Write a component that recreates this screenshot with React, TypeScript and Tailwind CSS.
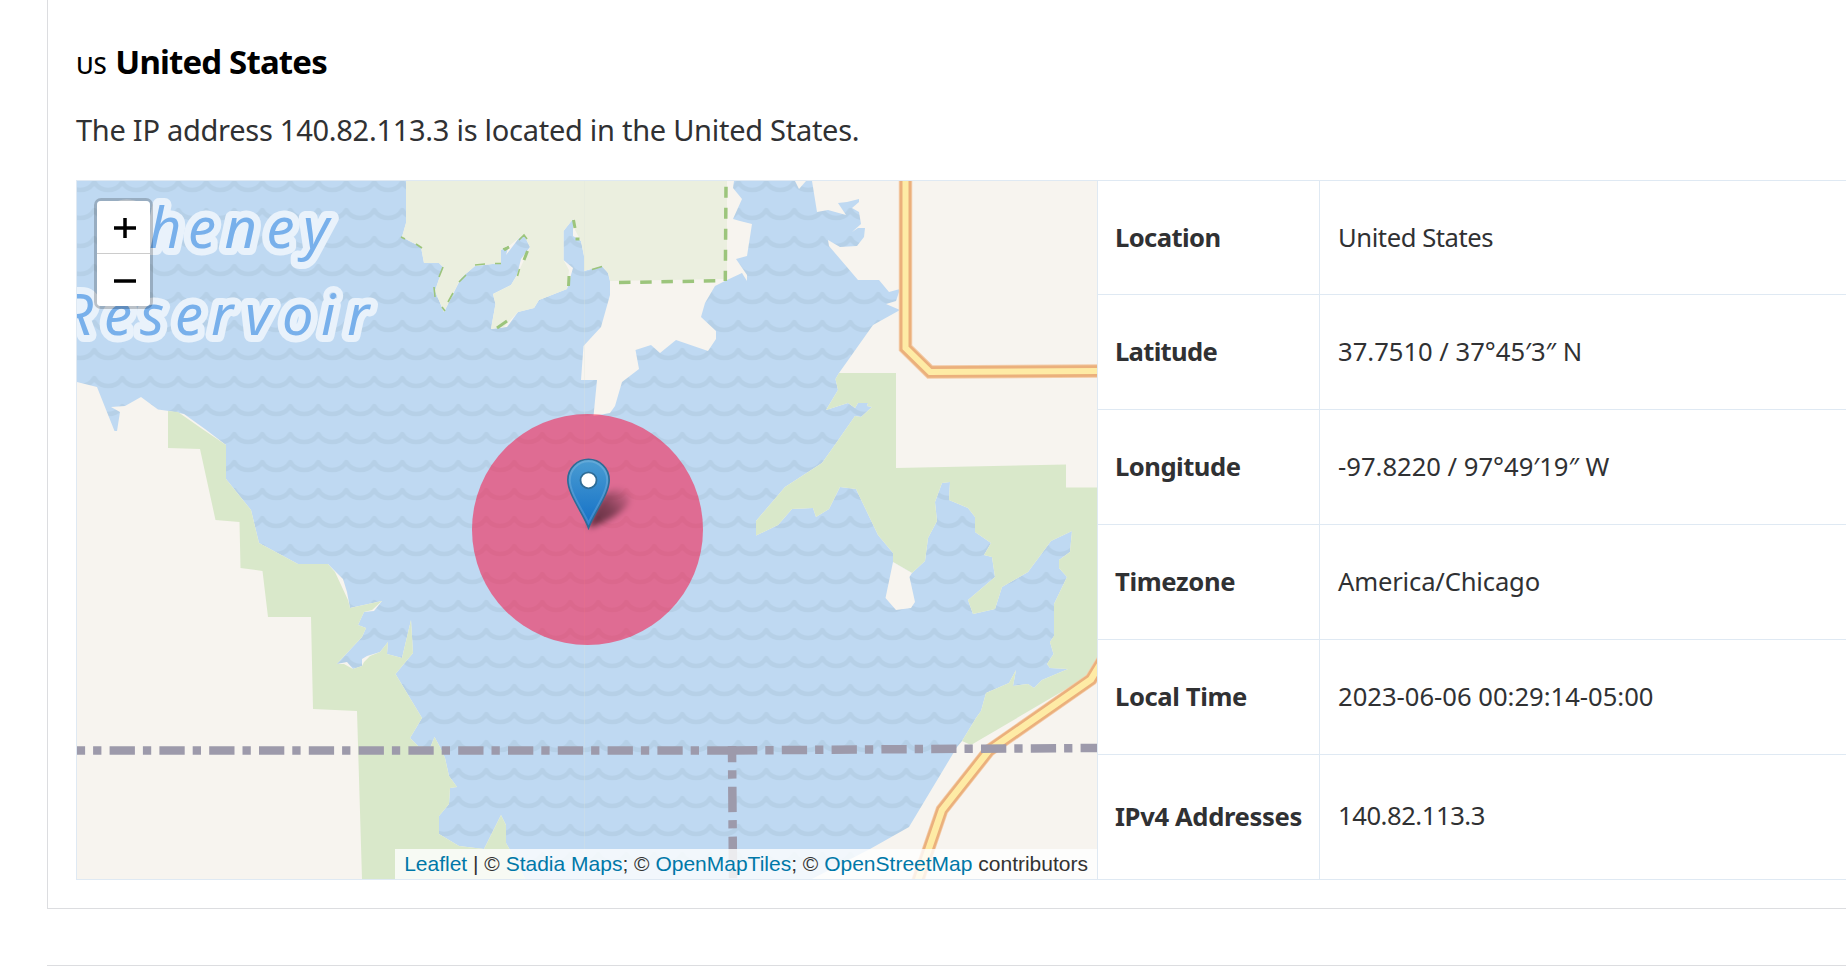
import React from "react";

const mainShore =
  "77,382 97,387 114.5,431 117,431 120,412 111,407 125,406 141,397 158,409.5 169,411 184,414 205,429 226,445 226,479 251,510 259,543 298,564 328,564 343,579 347,592 350,608 382,601 374,611 364,612 358,625 366,628 362,637 336.7,664 347,662 353,669 362,666 362,659 367,656 380,652 388,642 387,654 402,658 411,620 413,653 395.5,674 422,718 410,738 418,746 430,748 434.5,737 440,747 445,758 449,776 457,787 450,788 449,804 439,816 439,834 459,846 484,849 501,815 506,825 506,843 510,850 525,879 77,879";

const westWood =
  "168,411 178,412 203,429.5 226,445 226,479 251,510 259,543 298,564 328,564 335,572 348,600 350,608 382,601 372,610 364,612 358,625 366,628 362,637 336.7,664 344,664 353,669 362,666 364,662 370,656 380,652 388,642 387,654 402,658 411,620 413,653 395.5,674 422,718 410,738 418,746 430,748 434.5,737 440,747 445,758 449,776 457,787 450,788 449,804 439,816 439,834 459,846 484,849 501,815 506,825 506,843 510,850 525,879 362,879 357,711 313,709 311,617 268,617 262.5,571 240.5,568 239.5,522 215.5,520 200,449 168,448";

const park =
  "406,181 406,223 402,237 421,247 424,263 439,263 443,267 435,291 444,312 461,278 475,266 501,263 501,250 509,246 519,238 524,235 530,247 523,262 517,275 511,285 493,294 495.5,304 491,329 504,327 518,312 534,308 539,300 567,289 569,270 563.5,260 563.5,231 573,219 575,230 581,241 584,256 584,271 602,266 608,273 610,281 727,279 727,181";

const northLand =
  "406,181 406,223 402,237 421,247 424,263 439,263 443,267 435,291 444,312 461,278 475,266 501,263 501,250 509,245 506,255 519,238 524,235 530,247 521,259 517,275 511,285 493,294 495.5,304 491,329 507,327 518,312 534,308 539,300 567,289 573,268 563.5,260 563.5,231 573,219 573,236 581,241 584,256 584,271 602,266 608,273 610,281 610,295 601,327 583.5,346 581,380 597,380 593.5,416 610,413 615,406 622,382 639,369 635.5,350 651,345 660,353 676,340 708,351 716,339 716,331 701,317 705,303 715,286 727,280 742,273 747,281 747,275 736,259 747,256 752,224 740,221 733,219 742,199 733,188 734,181";

const eastShoreTop =
  "812,181 817,212 828,210 846,215 838,203 847,202 859,199 859,202 852,208 859,212 861,224 852,232 858,228 865,228 864,237 857,246 840,247 828,240 829,246 858,280 879,280 889,292 900,289 896,301 886,304 900,310 873,325 839,373";

const eastShore =
  "839,373 835.5,379 838,390 826,410 848,403 855,408 858,403 868,403 867,406 872,407 861,417 855,416 832,449 822,463 785,487 756,521 756,535.5 778,525 792,509 813,508 816,517 829,509 840,487 856,489 878,535 893,553 893,562 912,573 925,561 928,538 937,521 935,502 942,483 950,482 949,500 968,508 975,517 975,532 991,543 984,555 992,557 995,577 968,600 973,614 995,609 1002,587 1028,572 1051,541 1072,531 1070,552 1059,560 1059,568 1067,577 1054,604 1054,636 1050,642 1053.5,654 1047,664 1050,668 1068,669 1042,680 1034,688 1028,684 1013,686 1016,670 1009,683 986,693 981,711 976,718 962,741";

const coastTicks =
  "M401 237l4 2M416 244l6 4M443 267l-4 10M434 287l1 10M442 307l3 4M453 293l-5 9M466 275l-7 7M475 265l10-1M495 263.500l6 0M503 249l6-2M519 240l5-5 3 4M519.500 269l-2 7M592 269.500l10-3";

const coastTicksBold = "M504 250l5-3M527.500 251l-3.500 9M573.500 220l1.500 8M575.500 239l4 0M569 276l-.5 10M497 328l10-7";

const Waves = ({ id, opacity }: { id: string; opacity: number }) => (
  <pattern id={id} x="94.300" y="200" width="28" height="28" patternUnits="userSpaceOnUse">
    <path
      d="M-28 10A16.200 16.200 0 0 0 0 10A16.200 16.200 0 0 0 28 10A16.200 16.200 0 0 0 56 10"
      fill="none"
      stroke="#a8c2d8"
      strokeOpacity={opacity}
      strokeWidth="4.500"
      strokeLinejoin="round"
    />
  </pattern>
);

function MapCanvas() {
  return (
    <svg className="block h-[698px] w-[1020px]" viewBox="77 181 1020 698" aria-label="Map">
      <defs>
        <Waves id="waves" opacity={0.4} />
        <linearGradient id="pin" x1="0" y1="0" x2="0" y2="1">
          <stop offset="0" stopColor="#4a9cd2" />
          <stop offset="1" stopColor="#126fc6" />
        </linearGradient>
        <linearGradient id="shade" x1="0" y1="1" x2="1" y2="0">
          <stop offset="0" stopColor="#000" stopOpacity="0.6" />
          <stop offset="0.500" stopColor="#000" stopOpacity="0.42" />
          <stop offset="1" stopColor="#000" stopOpacity="0" />
        </linearGradient>
        <filter id="soft" x="-40%" y="-40%" width="180%" height="180%">
          <feGaussianBlur stdDeviation="3" />
        </filter>
      </defs>
      <rect x="77" y="181" width="1020" height="698" fill="#bfd9f2" />
      <rect x="77" y="181" width="1020" height="698" fill="url(#waves)" />

      <g fill="#f7f4ef">
        <polygon points={mainShore} />
        <polygon points={northLand} />
        <polygon points="795,181 799,189 806,181" />
        <polygon points={`${eastShoreTop} ${eastShore} 957,747 909,827 870,849 812,879 1097,879 1097,181`} />
      </g>
      <polygon points={westWood} fill="#d9e8ca" />
      <polygon points={`${eastShore} 971,745 1097,671 1097,487.5 1066,487.5 1066,464.500 896,468 896,373`} fill="#d9e8ca" />
      <polygon points="893,562 885.5,598 896,610 911,608 915,602 909.5,577 912,573" fill="#f7f4ef" />
      <polygon points={park} fill="#ebefdf" />

      <g fill="none" stroke="#9cc57c">
        <path d="M726 186.700L725.300 281" strokeDasharray="11 10" strokeWidth="3.500" />
        <path d="M619 282.500L716 280.800" strokeDasharray="11.500 9.700" strokeWidth="3.500" />
        <path d={coastTicks} strokeWidth="1.600" />
        <path d={coastTicksBold} strokeWidth="3" />
      </g>
      <path d="M584.500 181V879" stroke="#dfe5dc" strokeOpacity="0.28" />

      <g fill="none" strokeLinejoin="miter">
        <path d="M905.500 175V348L930 372L1100 371" stroke="#f3cba7" strokeWidth="13.500" />
        <path d="M905.500 175V348L930 372L1100 371" stroke="#ebb07c" strokeWidth="11.500" />
        <path d="M905.500 175V348L930 372L1100 371" stroke="#feeba5" strokeWidth="6" />
        <path d="M1104 658L1091 679.500L989 750.500L942 810L916 886" stroke="#f3cba7" strokeWidth="13" />
        <path d="M1104 658L1091 679.500L989 750.500L942 810L916 886" stroke="#ebb07c" strokeWidth="11.500" />
        <path d="M1104 658L1091 679.500L989 750.500L942 810L916 886" stroke="#feeba5" strokeWidth="6.500" />
      </g>

      <g fill="none" stroke="#9d9aab" strokeWidth="8.500" strokeDasharray="25.300 8 8.300 8.200">
        <path d="M59.800 750.500H732" />
        <path d="M732 750.500L925 749L1100 748" />
        <path d="M732 746L733 879" strokeDashoffset="9" />
      </g>

      <g
        fill="#78b0eb"
        stroke="#e9f2fb"
        strokeWidth="14"
        strokeLinejoin="round"
        paintOrder="stroke"
        fontFamily="'Noto Sans', 'Open Sans', sans-serif"
        fontStyle="italic"
        fontSize="56"
      >
        <text x="101 149 188 224.500 266.500 303" y="248">Cheney</text>
        <text x="61 104 140 175 211 245 282 321 347" y="335">Reservoir</text>
      </g>

      <circle cx="587.500" cy="529.500" r="115.500" fill="#ff0033" fillOpacity="0.5" />

      <path d="M589 528C592 512 600 494 612 490C628 486 636 498 624 509C613 519 600 524 589 528Z" fill="url(#shade)" filter="url(#soft)" />
      <path
        d="M588.500 528C583 513 567.800 494 567.800 480A20.700 20.700 0 0 1 609.200 480C609.200 494 594 513 588.500 528Z"
        fill="url(#pin)"
        stroke="#2e6c97"
        strokeWidth="1.600"
      />
      <path
        d="M588.500 523C582 509 569.800 493 569.800 480A18.700 18.700 0 0 1 607.200 480C607.200 493 595 509 588.500 523Z"
        fill="none"
        stroke="#fff"
        strokeOpacity="0.15"
        strokeWidth="2"
      />
      <circle cx="588.500" cy="480.300" r="8" fill="#fff" stroke="#2e6c97" strokeWidth="1.800" />
    </svg>
  );
}

function ZoomControl() {
  return (
    <div className="absolute top-[17px] left-[17px] w-[59px] rounded-[7px] border-[3px] border-black/20 bg-clip-padding">
      <div className="overflow-hidden rounded-[4px] bg-white">
        <button className="flex h-[53px] w-full items-center justify-center border-b border-[#ccc] pt-px pl-0.5" aria-label="Zoom in">
          <svg className="h-[22px] w-[22px]" viewBox="0 0 22 22">
            <path d="M0 11H22M11 1V21" stroke="#000" strokeWidth="3.500" />
          </svg>
        </button>
        <button className="flex h-[52px] w-full items-center justify-center pt-px pl-0.5" aria-label="Zoom out">
          <svg className="h-[22px] w-[22px]" viewBox="0 0 22 22">
            <path d="M0 11H22" stroke="#000" strokeWidth="3.500" />
          </svg>
        </button>
      </div>
    </div>
  );
}

const rows = [
  { label: "Location", value: "United States", labelClass: "tracking-[-0.6px]", valueClass: "tracking-[-0.43px]" },
  { label: "Latitude", value: "37.7510 / 37°45′3″ N", labelClass: "tracking-[-0.7px]", valueClass: "" },
  { label: "Longitude", value: "-97.8220 / 97°49′19″ W", labelClass: "tracking-[-0.5px]", valueClass: "" },
  { label: "Timezone", value: "America/Chicago", labelClass: "tracking-[-0.35px]", valueClass: "tracking-[-0.17px]" },
  { label: "Local Time", value: "2023-06-06 00:29:14-05:00", labelClass: "tracking-[-0.38px]", valueClass: "" },
  { label: "IPv4 Addresses", value: "140.82.113.3", labelClass: "tracking-[-0.35px]", valueClass: "tracking-[-0.45px]" },
];

export default function App() {
  return (
    <div className="h-[966px] overflow-hidden bg-white pl-[47px] font-['Noto_Sans','Open_Sans',sans-serif] text-[#303133]">
      <section className="h-[909px] border-b border-l border-[#dcdde0] pl-7">
        <h2 className="flex h-[96px] items-baseline gap-[9px] pt-[38px] text-[33px] leading-[48px] font-bold text-black">
          <span className="text-[24px] font-medium tracking-[-0.3px]">US</span>
          <span className="tracking-[-0.85px]">United States</span>
        </h2>
        <p className="h-[84px] pt-3 text-[29px] leading-[44px] tracking-[-0.27px] whitespace-nowrap">
          The IP address 140.82.113.3 is located in the United States.
        </p>
        <div className="flex h-[700px] border border-r-0 border-[#dfe9f3]">
          <div className="relative w-[1020px] shrink-0">
            <MapCanvas />
            <ZoomControl />
            <div className="absolute right-0 bottom-0 h-[30px] bg-white/80 px-[9px] font-['Liberation_Sans',Arial,sans-serif] text-[21px] leading-[30px] whitespace-nowrap text-[#333]">
              <a className="text-[#0078a8]">Leaflet</a> | © <a className="text-[#0078a8]">Stadia Maps</a>; ©{" "}
              <a className="text-[#0078a8]">OpenMapTiles</a>; © <a className="text-[#0078a8]">OpenStreetMap</a> contributors
            </div>
          </div>
          <dl className="grid flex-1 grid-cols-[222px_1fr] grid-rows-[114px_115px_115px_115px_115px_124px] border-l border-[#dfe9f3] text-[25.600px]">
            {rows.map((r, i) => (
              <React.Fragment key={r.label}>
                <dt
                  className={`flex items-center border-r border-[#dfe9f3] pt-px pl-[17px] font-bold whitespace-nowrap ${r.labelClass} ${i < 5 ? "border-b" : ""}`}
                >
                  {r.label}
                </dt>
                <dd
                  className={`flex items-center border-[#dfe9f3] pl-[18px] whitespace-nowrap ${r.valueClass} ${i < 5 ? "border-b pt-px" : "pb-px"}`}
                >
                  {r.value}
                </dd>
              </React.Fragment>
            ))}
          </dl>
        </div>
      </section>
      <div className="mt-[56px] h-px bg-[#dcdde0]" />
    </div>
  );
}
